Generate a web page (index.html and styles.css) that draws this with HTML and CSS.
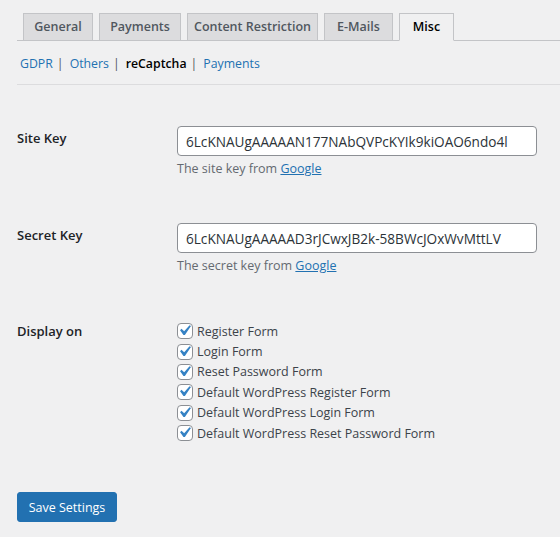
FILE: index.html
```html
<!DOCTYPE html>
<html lang="en">
<head>
<meta charset="utf-8">
<title>Misc - reCaptcha</title>
<link rel="stylesheet" href="styles.css">
</head>
<body>
<div class="wrap">
  <nav class="tabs">
    <a class="tab tab-general" href="#">General</a>
    <a class="tab tab-payments" href="#">Payments</a>
    <a class="tab tab-content" href="#">Content Restriction</a>
    <a class="tab tab-emails" href="#">E-Mails</a>
    <a class="tab tab-misc active" href="#">Misc</a>
  </nav>
  <ul class="subnav">
    <li><a href="#">GDPR</a><span class="sep">|</span></li>
    <li><a href="#">Others</a><span class="sep">|</span></li>
    <li><span class="current">reCaptcha</span><span class="sep">|</span></li>
    <li><a href="#">Payments</a></li>
  </ul>
  <div class="rule"></div>
  <form class="form">
    <div class="row row-site">
      <div class="label">Site Key</div>
      <div class="field">
        <input class="text-input" type="text" value="6LcKNAUgAAAAAN177NAbQVPcKYIk9kiOAO6ndo4l">
        <p class="desc">The site key from <a href="#">Google</a></p>
      </div>
    </div>
    <div class="row row-secret">
      <div class="label">Secret Key</div>
      <div class="field">
        <input class="text-input" type="text" value="6LcKNAUgAAAAAD3rJCwxJB2k-58BWcJOxWvMttLV">
        <p class="desc">The secret key from <a href="#">Google</a></p>
      </div>
    </div>
    <div class="row row-display">
      <div class="label label-display">Display on</div>
      <div class="field checks">
        <label class="check"><span class="box"><svg viewBox="0 0 20 20"><path d="M14.83 4.89l1.34.94-5.81 8.38H9.02L5.78 9.67l1.34-1.25 2.57 2.4z"/></svg></span>Register Form</label>
        <label class="check"><span class="box"><svg viewBox="0 0 20 20"><path d="M14.83 4.89l1.34.94-5.81 8.38H9.02L5.78 9.67l1.34-1.25 2.57 2.4z"/></svg></span>Login Form</label>
        <label class="check"><span class="box"><svg viewBox="0 0 20 20"><path d="M14.83 4.89l1.34.94-5.81 8.38H9.02L5.78 9.67l1.34-1.25 2.57 2.4z"/></svg></span>Reset Password Form</label>
        <label class="check"><span class="box"><svg viewBox="0 0 20 20"><path d="M14.83 4.89l1.34.94-5.81 8.38H9.02L5.78 9.67l1.34-1.25 2.57 2.4z"/></svg></span>Default WordPress Register Form</label>
        <label class="check"><span class="box"><svg viewBox="0 0 20 20"><path d="M14.83 4.89l1.34.94-5.81 8.38H9.02L5.78 9.67l1.34-1.25 2.57 2.4z"/></svg></span>Default WordPress Login Form</label>
        <label class="check"><span class="box"><svg viewBox="0 0 20 20"><path d="M14.83 4.89l1.34.94-5.81 8.38H9.02L5.78 9.67l1.34-1.25 2.57 2.4z"/></svg></span>Default WordPress Reset Password Form</label>
      </div>
    </div>
    <div class="actions">
      <button class="button" type="button">Save Settings</button>
    </div>
  </form>
</div>
</body>
</html>
```

FILE: styles.css
```css
* { box-sizing: border-box; }
html, body { margin: 0; padding: 0; }
body {
  background: #f0f0f1;
  font-family: "Open Sans", "Noto Sans", "DejaVu Sans", sans-serif;
  font-size: 12.5px;
  color: #3c434a;
  width: 560px;
  height: 537px;
  overflow: hidden;
}
.wrap {
  padding: 13px 0 0 17px;
}
.tabs {
  display: flex;
  gap: 6px;
  padding-left: 6px;
  border-bottom: 1px solid #c3c4c7;
  height: 28px;
}
.tab {
  display: flex;
  align-items: center;
  justify-content: center;
  height: 28px;
  padding: 0 0 1px;
  border: 1px solid #c3c4c7;
  background: #dcdcde;
  color: #50575e;
  font-size: 12.5px;
  font-weight: 600;
  white-space: nowrap;
  text-decoration: none;
}
.tab-general { width: 70px; }
.tab-payments { width: 82px; }
.tab-content { width: 131px; }
.tab-emails { width: 69px; }
.tab-misc { width: 55px; }
.tab.active {
  background: #f0f0f1;
  border-bottom-color: #f0f0f1;
  color: #000;
}
.subnav {
  list-style: none;
  margin: 0;
  padding: 14px 0 0 3px;
  display: flex;
  height: 43px;
  line-height: 18px;
  font-size: 12.3px;
}
.subnav a { color: #2271b1; text-decoration: none; }
.subnav .current { color: #000; font-weight: 600; }
.subnav .sep { color: #50575e; padding: 0 6px 0 4px; }
.rule {
  height: 1px;
  background: #dcdcde;
}
.row {
  display: flex;
}
.row-site { padding-top: 41px; }
.row-secret { padding-top: 45px; }
.row-display { padding-top: 46px; }
.label {
  width: 160px;
  flex: none;
  font-size: 13px;
  font-weight: 600;
  color: #1d2327;
  line-height: 20px;
  padding-top: 2px;
}
.label-display { padding-top: 0; }
.field { width: 360px; }
.text-input {
  display: block;
  width: 360px;
  height: 30px;
  margin: 0;
  padding: 0 8px;
  border: 1px solid #8c8f94;
  border-radius: 4px;
  background: #fff;
  color: #2c3338;
  font-family: inherit;
  font-size: 13.6px;
  outline: none;
}
.desc {
  margin: 4px 0 0;
  color: #646970;
  font-size: 12.5px;
  line-height: 18px;
}
.desc a { color: #2271b1; text-decoration: underline; }
.checks {
  display: flex;
  flex-direction: column;
}
.check {
  display: flex;
  align-items: center;
  height: 20.4px;
  color: #3c434a;
  font-size: 12.5px;
  white-space: nowrap;
}
.box {
  position: relative;
  width: 16px;
  height: 16px;
  flex: none;
  border: 1px solid #8c8f94;
  border-radius: 4px;
  background: #fff;
  margin-right: 4px;
}
.box svg {
  position: absolute;
  left: -4px;
  top: -4px;
  width: 21px;
  height: 21px;
  fill: #3582c4;
}
.actions { padding-top: 49px; }
.button {
  height: 30px;
  width: 100px;
  padding: 0;
  border: 1px solid #2271b1;
  border-radius: 3px;
  background: #2271b1;
  color: #fff;
  font-family: inherit;
  font-size: 12.5px;
  white-space: nowrap;
}
```
